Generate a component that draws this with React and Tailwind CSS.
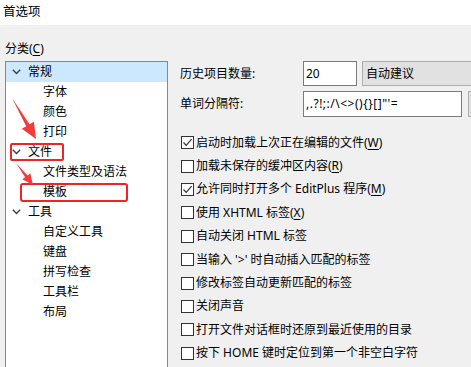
import React from "react";

const Chevron = () => (
  <svg width="9" height="6" viewBox="0 0 9 6" className="shrink-0">
    <polyline points="0.8,0.8 4.5,4.5 8.2,0.8" fill="none" stroke="#404040" strokeWidth="1.4" />
  </svg>
);

const tree = [
  { t: "常规", top: true, sel: true },
  { t: "字体" },
  { t: "颜色" },
  { t: "打印" },
  { t: "文件", top: true },
  { t: "文件类型及语法" },
  { t: "模板" },
  { t: "工具", top: true },
  { t: "自定义工具" },
  { t: "键盘" },
  { t: "拼写检查" },
  { t: "工具栏" },
  { t: "布局" },
];

const U = ({ children }) => <span className="underline underline-offset-2">{children}</span>;

const checks = [
  { c: true, t: <>启动时加载上次正在编辑的文件(<U>W</U>)</> },
  { c: false, t: <>加载未保存的缓冲区内容(<U>R</U>)</> },
  { c: true, t: <>允许同时打开多个 EditPlus 程序(<U>M</U>)</> },
  { c: false, t: <>使用 XHTML 标签(<U>X</U>)</> },
  { c: false, t: <>自动关闭 HTML 标签</> },
  { c: false, t: <>当输入 '&gt;' 时自动插入匹配的标签</> },
  { c: false, t: <>修改标签自动更新匹配的标签</> },
  { c: false, t: <>关闭声音</> },
  { c: false, t: <>打开文件对话框时还原到最近使用的目录</> },
  { c: false, t: <>按下 HOME 键时定位到第一个非空白字符</> },
];

export default function App() {
  return (
    <div className="relative w-[471px] h-[367px] overflow-hidden text-[12px] text-black font-['Noto_Sans','Noto_Sans_CJK_SC',sans-serif]">
      <div className="h-[25px] bg-white pl-[3px] leading-[24px] text-[12.5px]">首选项</div>
      <div className="flex h-[342px] bg-[#f0f0f0] overflow-hidden">
        <div className="w-[168px] shrink-0 pl-[5px] pt-[14px] flex flex-col">
          <div className="h-[20px] leading-[20px] mb-[2px]">分类(<U>C</U>)</div>
          <div className="w-[163px] h-[320px] shrink-0 border border-[#828790] bg-white">
            {tree.map((r, i) =>
              r.top ? (
                <div key={i} className={`h-[20px] flex items-center pl-[6px] ${r.sel ? "bg-[#cce8ff]" : ""}`}>
                  <Chevron />
                  <span className="ml-[7px] leading-[20px]">{r.t}</span>
                </div>
              ) : (
                <div key={i} className="h-[20px] leading-[20px] pl-[37px]">{r.t}</div>
              )
            )}
          </div>
        </div>
        <div className="flex-1 pl-[12px] pt-[36px] flex flex-col">
          <div className="flex items-center h-[25px]">
            <div className="w-[123px] shrink-0">历史项目数量:</div>
            <div className="w-[54px] h-[25px] shrink-0 border border-[#7a7a7a] bg-white pl-[2px] leading-[23px]">20</div>
            <div className="ml-[5px] w-[120px] h-[25px] shrink-0 border border-[#adadad] bg-[#e1e1e1] pl-[3px] leading-[23px]">自动建议</div>
          </div>
          <div className="flex items-center h-[26px] mt-[5px]">
            <div className="w-[123px] shrink-0">单词分隔符:</div>
            <div className="w-[159px] h-[26px] shrink-0 border border-[#7a7a7a] bg-white pl-[2px] leading-[24px] tracking-[0.5px]">,.?!;:/\&lt;&gt;(){"{}"}[]"'=</div>
            <div className="ml-[6px] w-[20px] h-[26px] shrink-0 border border-[#adadad] bg-[#e1e1e1]"></div>
          </div>
          <div className="mt-[14px] flex flex-col">
            {checks.map((c, i) => (
              <div key={i} className="h-[23.4px] flex items-center">
                <div className="ml-[1px] w-[13px] h-[13px] shrink-0 border border-[#333333] bg-white flex items-center justify-center">
                  {c.c && (
                    <svg width="11" height="11" viewBox="0 0 11 11">
                      <polyline points="1.5,5.5 4.2,8.3 9.6,2.2" fill="none" stroke="#333333" strokeWidth="1.2" />
                    </svg>
                  )}
                </div>
                <span className="ml-[2px] whitespace-nowrap leading-[18px]">{c.t}</span>
              </div>
            ))}
          </div>
        </div>
      </div>

      {/* annotations */}
      <div className="absolute left-[10px] top-[143px] w-[54px] h-[18px] border-2 border-[#f02424] rounded-[2px]"></div>
      <div className="absolute left-[20px] top-[183px] w-[108px] h-[19px] border-2 border-[#f02424] rounded-[3px]"></div>
      <svg className="absolute left-0 top-0 pointer-events-none" width="471" height="367">
        <polygon points="12,98 29.6,124.2 33.9,121.7 36,139 21.9,128.7 26.2,126.2" fill="#f23c3c" />
        <polygon points="16,163 27.5,175.5 30.3,173.3 33,185 22.3,179.3 25.1,177.2" fill="#f23c3c" />
      </svg>
    </div>
  );
}
